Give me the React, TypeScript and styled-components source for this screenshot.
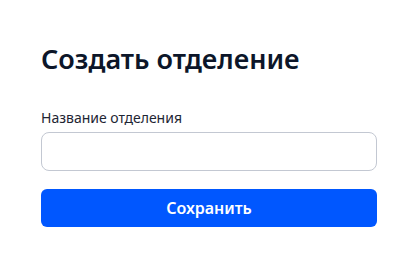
import styled, { createGlobalStyle } from "styled-components"

const Global = createGlobalStyle`
    html, body {
        margin: 0;
        padding: 0;
        background: #ffffff;
    }
    body {
        font-family: "Noto Sans", "Open Sans", sans-serif;
    }
`

const CreateDepartment = () => {
    return (
        <Card>
            <Title>Создать отделение</Title>

            <Field>
                <Label htmlFor="dep-name">Название отделения</Label>
                <Input id="dep-name" type="text" />
            </Field>

            <Button type="button">Сохранить</Button>
        </Card>
    )
}

const App = () => {
    return (
        <>
            <Global />
            <CreateDepartment />
        </>
    )
}

export default App


const Card = styled.div`
    width: 418px;
    height: 264px;
    box-sizing: border-box;
    padding: 41px 41px 0 41px;
    display: flex;
    flex-direction: column;
    background: #fff;
`

const Title = styled.h1`
    margin: 0 0 31px 0;
    font-size: 27px;
    line-height: 36px;
    font-weight: 600;
    color: #0c1629;
`

const Field = styled.div`
    display: flex;
    flex-direction: column;
    gap: 5px;
    margin-bottom: 18px;
`

const Label = styled.label`
    font-size: 14px;
    line-height: 19px;
    color: #1e2533;
`

const Input = styled.input`
    box-sizing: border-box;
    width: 100%;
    height: 39px;
    border: 1px solid #c3c8d2;
    border-radius: 8px;
    padding: 0 12px;
    font-family: inherit;
    font-size: 14px;
    outline: none;
`

const Button = styled.button`
    box-sizing: border-box;
    width: 100%;
    height: 38px;
    border: none;
    border-radius: 6px;
    background: #0057ff;
    color: #fff;
    font-family: inherit;
    font-size: 16px;
    font-weight: 600;
    cursor: pointer;
`
